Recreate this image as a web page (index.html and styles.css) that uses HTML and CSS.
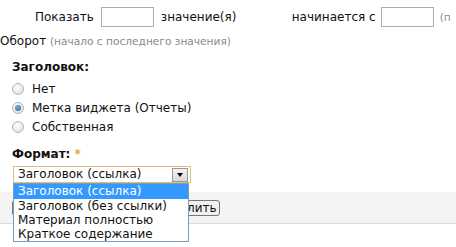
FILE: index.html
```html
<!DOCTYPE html>
<html lang="ru">
<head>
    <meta charset="UTF-8">
    <title>Настройки виджета</title>
    <link rel="stylesheet" href="styles.css">
</head>
<body>
    <div class="pager">
        <span class="cell-show">Показать</span>
        <span class="box"></span>
        <span class="cell-text">значение(я)</span>
        <span class="cell-from">начинается с</span>
        <span class="box"></span>
        <span class="hint">(п</span>
    </div>
    <div class="reverse">Оборот <span class="hint">(начало с последнего значения)</span></div>

    <div class="group">
        <div class="label">Заголовок:</div>
        <div class="radio"><span class="dot"></span>Нет</div>
        <div class="radio"><span class="dot checked"></span>Метка виджета (Отчеты)</div>
        <div class="radio"><span class="dot"></span>Собственная</div>
    </div>

    <div class="group format">
        <div class="label">Формат: <span class="req">*</span></div>
        <div class="select">
            <span class="value">Заголовок (ссылка)</span>
            <span class="arrow"></span>
            <ul class="options">
                <li class="selected">Заголовок (ссылка)</li>
                <li>Заголовок (без ссылки)</li>
                <li>Материал полностью</li>
                <li>Краткое содержание</li>
            </ul>
        </div>
    </div>

    <div class="actions">
        <button>Сохранить</button>
        <button>Удалить</button>
    </div>
</body>
</html>
```
FILE: styles.css
```css
html, body {
    min-height: 100%;
}
body {
    margin: 0;
    font-family: "DejaVu Sans", Verdana, sans-serif;
    font-size: 12px;
    color: #111;
    background: #fff;
    padding-bottom: 30px;
}
.pager {
    display: flex;
    align-items: center;
    height: 20px;
    margin-top: 7px;
    white-space: nowrap;
    overflow: hidden;
}
.pager > span {
    flex: none;
}
.cell-show {
    margin-left: 35px;
    margin-right: 7px;
}
.box {
    display: inline-block;
    width: 51px;
    height: 18px;
    border: 1px solid #aeaeae;
}
.cell-text {
    margin-left: 7px;
    width: 131px;
}
.cell-from {
    margin-right: 5px;
}
.pager .hint {
    margin-left: 6px;
}
.hint {
    color: #8a8a8a;
    font-size: 10.6px;
}
.reverse {
    margin-top: 7px;
    line-height: 14px;
}
.group {
    padding-left: 12px;
}
.label {
    font-weight: bold;
    margin-top: 12px;
    line-height: 14px;
    margin-bottom: 5px;
}
.req {
    color: #e8a33c;
}
.radio {
    display: flex;
    align-items: center;
    height: 19px;
}
.dot {
    width: 10px;
    height: 10px;
    border: 1px solid #b4b4b4;
    border-radius: 50%;
    background: radial-gradient(circle at 40% 35%, #fff, #dcdcdc);
    margin-right: 8px;
    position: relative;
}
.dot.checked::after {
    content: "";
    position: absolute;
    left: 2px;
    top: 2px;
    width: 6px;
    height: 6px;
    border-radius: 50%;
    background: radial-gradient(circle at 40% 35%, #7fb2dc, #1d5f95);
}
.format .label {
    margin-top: 11px;
    margin-bottom: 5px;
}
.select {
    position: relative;
    width: 172px;
    height: 15px;
    margin-left: 1px;
    border: 1px solid #dcbf78;
    padding-left: 4px;
    line-height: 15px;
    display: flex;
    align-items: center;
}
.select .value {
    flex: 1;
}
.arrow {
    width: 14px;
    height: 12px;
    border: 1px solid #9a9a9a;
    background: linear-gradient(#f4f4f4, #d8d8d8);
    margin-right: 2px;
    position: relative;
}
.arrow::after {
    content: "";
    position: absolute;
    left: 4px;
    top: 4px;
    border-left: 3px solid transparent;
    border-right: 3px solid transparent;
    border-top: 4px solid #000;
}
.options {
    position: absolute;
    left: -1px;
    top: 16px;
    width: 174px;
    margin: 0;
    padding: 0;
    list-style: none;
    background: #fff;
    border: 1px solid #7f9db9;
    z-index: 2;
}
.options li {
    height: 14px;
    line-height: 14px;
    padding-left: 4px;
}
.options li.selected {
    background: #3399ff;
    color: #fff;
    height: 15px;
    line-height: 15px;
}
.actions {
    margin-top: 9px;
    background: #f4f4f4;
    border-bottom: 1px solid #dadada;
    height: 31px;
    padding-left: 12px;
    display: flex;
    align-items: center;
    gap: 4px;
}
.actions button {
    font-family: inherit;
    font-size: 12px;
    color: #111;
    border: 1px solid #777;
    border-radius: 3px;
    background: #f0f0f0;
    padding: 0 2px;
    height: 16px;
    line-height: 14px;
}
.actions button:first-child {
    width: 145px;
}
```
